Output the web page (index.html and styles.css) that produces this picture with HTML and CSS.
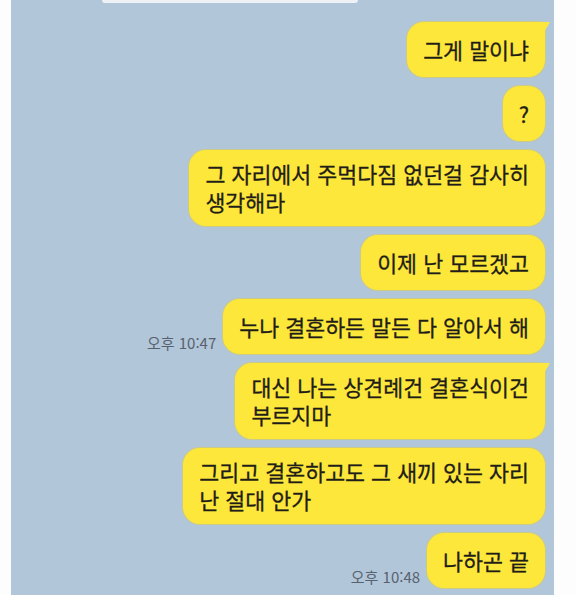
FILE: index.html
```html
<!DOCTYPE html>
<html lang="ko">
<head>
    <meta charset="UTF-8">
    <meta name="viewport" content="width=device-width, initial-scale=1.0">
    <title>채팅</title>
    <link rel="stylesheet" href="styles.css">
</head>
<body>
    <div class="chat">
        <div class="date-pill"></div>

        <div class="messages">
            <div class="row">
                <div class="bubble tail">그게 말이냐</div>
            </div>
            <div class="row">
                <div class="bubble">?</div>
            </div>
            <div class="row">
                <div class="bubble">그 자리에서 주먹다짐 없던걸 감사히<br>생각해라</div>
            </div>
            <div class="row">
                <div class="bubble">이제 난 모르겠고</div>
            </div>
            <div class="row">
                <span class="time">오후 10:47</span>
                <div class="bubble">누나 결혼하든 말든 다 알아서 해</div>
            </div>
            <div class="row">
                <div class="bubble tail">대신 나는 상견례건 결혼식이건<br>부르지마</div>
            </div>
            <div class="row">
                <div class="bubble">그리고 결혼하고도 그 새끼 있는 자리<br>난 절대 안가</div>
            </div>
            <div class="row">
                <span class="time">오후 10:48</span>
                <div class="bubble">나하곤 끝</div>
            </div>
        </div>
    </div>
</body>
</html>
```

FILE: styles.css
```css
/* Basic Reset */
* {
    margin: 0;
    padding: 0;
    box-sizing: border-box;
}

body {
    background: #fdfdfd;
    font-family: "Noto Sans CJK KR", "Noto Sans", sans-serif;
}

.chat {
    margin-left: 11px;
    width: 543px;
    height: 595px;
    background: #b2c6da;
    overflow: hidden;
}

/* cut-off date label at the top */
.date-pill {
    margin-left: 91px;
    width: 256px;
    height: 3px;
    background: #eef2f6;
    border-radius: 0 0 6px 6px;
}

.messages {
    display: flex;
    flex-direction: column;
    gap: 9px;
    padding: 19px 9px 0 0;
}

.row {
    display: flex;
    justify-content: flex-end;
    align-items: flex-end;
    gap: 7px;
}

.bubble {
    position: relative;
    min-height: 55px;
    display: flex;
    align-items: center;
    padding: 10px 16px;
    background: #fde73a;
    border-radius: 17px;
    box-shadow: 0 0 0 1px rgba(226, 206, 70, 0.55);
    color: #1f1d18;
    font-size: 21.7px;
    line-height: 28px;
    -webkit-text-stroke: 0.3px #1f1d18;
    white-space: nowrap;
}

.bubble.tail {
    border-top-right-radius: 6px;
}

.bubble.tail::after {
    content: "";
    position: absolute;
    top: 0;
    right: -5px;
    width: 11px;
    height: 11px;
    background: #fde73a;
    clip-path: polygon(0 0, 100% 0, 40% 100%, 0 100%);
}

.time {
    margin-bottom: 2px;
    color: #58626e;
    font-size: 15px;
    line-height: 18px;
    white-space: nowrap;
}
```
